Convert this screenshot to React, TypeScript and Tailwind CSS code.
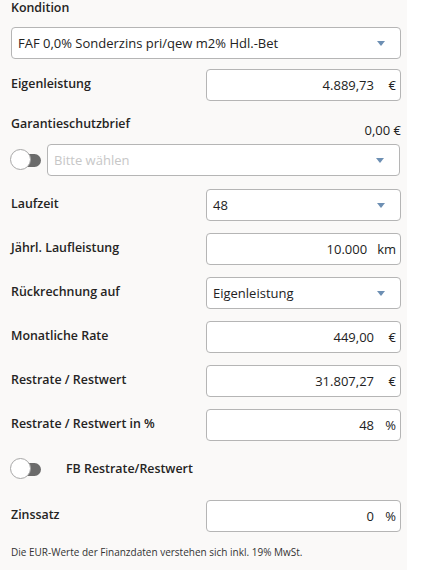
import React from "react";

const font = { fontFamily: '"Open Sans", "Noto Sans", sans-serif' };

function Caret() {
  return (
    <svg width="8" height="5" viewBox="0 0 8 5" className="shrink-0">
      <path d="M0 0 L8 0 L4 5 Z" fill="#6d8fb3" />
    </svg>
  );
}

function Toggle() {
  return (
    <div className="relative w-[32px] h-[24px] shrink-0">
      <div className="absolute left-[6px] top-[6px] w-[25px] h-[13px] rounded-full bg-[#6b6b6b]" />
      <div className="absolute left-0 top-[1px] w-[21px] h-[21px] rounded-full bg-white border border-[#a7a7a7]" />
    </div>
  );
}

function Select({ value, placeholder }: { value?: string; placeholder?: boolean }) {
  return (
    <div className="flex items-center justify-between h-[32px] w-full rounded-[4px] border border-[#b5b5b5] bg-white pl-[6px] pr-[15px]">
      <span className={placeholder ? "text-[#c7c7c7]" : "text-[#222]"}>{value}</span>
      <Caret />
    </div>
  );
}

function NumInput({ value, unit }: { value: string; unit: string }) {
  return (
    <div className="flex items-center justify-end gap-[10px] h-[32px] w-full rounded-[4px] border border-[#b5b5b5] bg-white pr-[4px] text-[#222]">
      <span>{value}</span>
      <span className="min-w-[12px] text-right">{unit}</span>
    </div>
  );
}

function Row({ label, children }: { label: string; children: React.ReactNode }) {
  return (
    <div className="flex items-start">
      <div className="w-[195px] pt-[5px] font-semibold text-[12.4px] text-[#252423]">{label}</div>
      <div className="w-[195px]">{children}</div>
    </div>
  );
}

export default function App() {
  return (
    <div className="flex w-[427px] h-[574px] bg-white text-[13px] leading-[20px]" style={font}>
      <div className="w-[407px] h-[570px] bg-[#faf9f8] pl-[11px] pr-[6px] flex flex-col">
        <div className="font-semibold text-[12.4px] text-[#252423] leading-[16px]">Kondition</div>
        <div className="mt-[11px] w-[390px]">
          <Select value="FAF 0,0% Sonderzins pri/qew m2% Hdl.-Bet" />
        </div>
        <div className="mt-[10px] flex flex-col gap-[12px]">
          <Row label="Eigenleistung">
            <NumInput value="4.889,73" unit="€" />
          </Row>
        </div>
        <div className="mt-[13px] w-[390px] flex justify-between">
          <span className="font-semibold text-[12.4px] text-[#252423]">Garantieschutzbrief</span>
          <span className="text-[#222] pt-[6px]">0,00 €</span>
        </div>
        <div className="mt-[4px] w-[390px] flex items-center gap-[5px] ml-[-1px]">
          <Toggle />
          <Select value="Bitte wählen" placeholder />
        </div>
        <div className="mt-[13px] flex flex-col gap-[12px]">
          <Row label="Laufzeit">
            <Select value="48" />
          </Row>
          <Row label="Jährl. Laufleistung">
            <NumInput value="10.000" unit="km" />
          </Row>
          <Row label="Rückrechnung auf">
            <Select value="Eigenleistung" />
          </Row>
          <Row label="Monatliche Rate">
            <NumInput value="449,00" unit="€" />
          </Row>
          <Row label="Restrate / Restwert">
            <NumInput value="31.807,27" unit="€" />
          </Row>
          <Row label="Restrate / Restwert in %">
            <NumInput value="48" unit="%" />
          </Row>
        </div>
        <div className="mt-[16px] flex items-center ml-[-1px]">
          <Toggle />
          <span className="ml-[24px] font-semibold text-[12.4px] text-[#252423]">FB Restrate/Restwert</span>
        </div>
        <div className="mt-[19px]">
          <Row label="Zinssatz">
            <NumInput value="0" unit="%" />
          </Row>
        </div>
        <div className="mt-[10px] text-[10px] text-[#333]">
          Die EUR-Werte der Finanzdaten verstehen sich inkl. 19% MwSt.
        </div>
      </div>
    </div>
  );
}
